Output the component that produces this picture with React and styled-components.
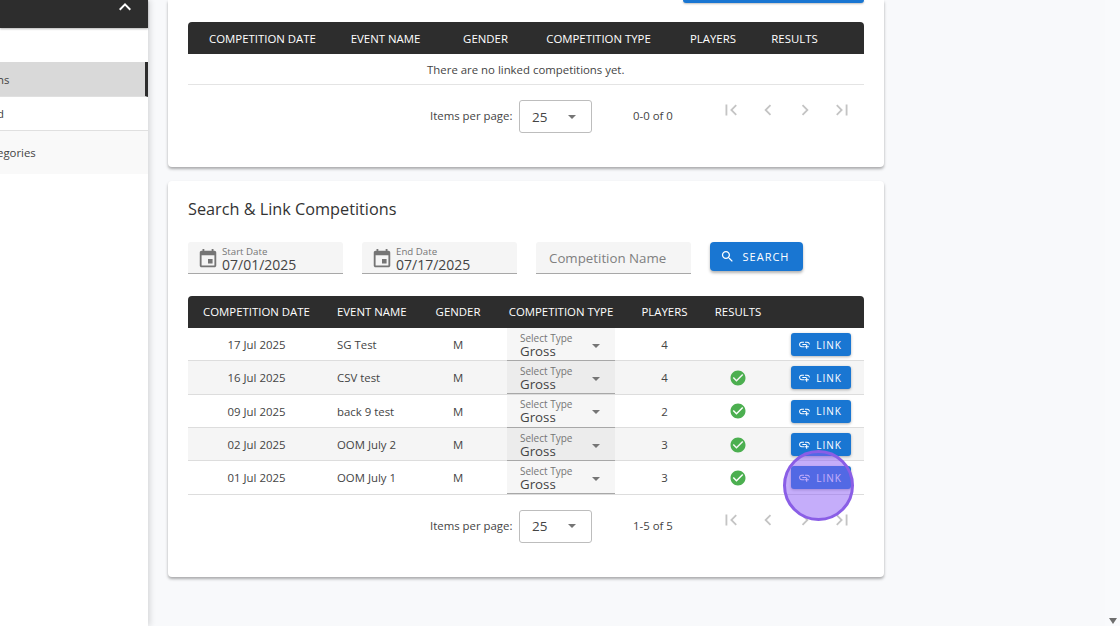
import React from 'react';
import styled, { createGlobalStyle } from 'styled-components';

const paths = {
  up: 'M12 8l-6 6 1.41 1.41L12 10.83l4.59 4.58L18 14z',
  first: 'M18.41 16.59L13.82 12l4.59-4.59L17 6l-6 6 6 6zM6 6h2v12H6z',
  prev: 'M15.41 7.41L14 6l-6 6 6 6 1.41-1.41L10.83 12z',
  next: 'M10 6L8.59 7.41 13.17 12l-4.58 4.59L10 18l6-6z',
  last: 'M5.59 7.41L10.18 12l-4.59 4.59L7 18l6-6-6-6zM16 6h2v12h-2z',
  event:
    'M17 12h-5v5h5v-5zM16 1v2H8V1H6v2H5c-1.11 0-1.99.9-1.99 2L3 19c0 1.1.89 2 2 2h14c1.1 0 2-.9 2-2V5c0-1.1-.9-2-2-2h-1V1h-2zm3 18H5V8h14v11z',
  search:
    'M15.5 14h-.79l-.28-.27C15.41 12.59 16 11.11 16 9.5 16 5.91 13.09 3 9.5 3S3 5.91 3 9.5 5.91 16 9.5 16c1.61 0 3.09-.59 4.23-1.57l.27.28v.79l5 4.99L20.49 19l-4.99-5zm-6 0C7.01 14 5 11.99 5 9.5S7.01 5 9.5 5 14 7.01 14 9.5 11.99 14 9.5 14z',
  link: 'M8 11h8v2H8zm12.1 1H22c0-2.76-2.24-5-5-5h-4v1.9h4c1.71 0 3.1 1.39 3.1 3.1zM3.9 12c0-1.71 1.39-3.1 3.1-3.1h4V7H7c-2.76 0-5 2.24-5 5s2.24 5 5 5h4v-1.9H7c-1.71 0-3.1-1.39-3.1-3.1zM17 12h-2v3h-3v2h3v3h2v-3h3v-2h-3z',
  check:
    'M12 2C6.48 2 2 6.48 2 12s4.48 10 10 10 10-4.48 10-10S17.52 2 12 2zm-2 15l-5-5 1.41-1.41L10 14.17l7.59-7.59L19 8l-9 9z',
};

function Icon({ name, size = 24, color = 'currentColor' }) {
  return (
    <svg width={size} height={size} viewBox="0 0 24 24" fill={color}>
      <path d={paths[name]} />
    </svg>
  );
}

const rows = [
  { date: '17 Jul 2025', name: 'SG Test', players: 4, done: false },
  { date: '16 Jul 2025', name: 'CSV test', players: 4, done: true },
  { date: '09 Jul 2025', name: 'back 9 test', players: 2, done: true },
  { date: '02 Jul 2025', name: 'OOM July 2', players: 3, done: true },
  { date: '01 Jul 2025', name: 'OOM July 1', players: 3, done: true },
];

const linkedCols = '149px 97px 103px 123px 106px 57px 1fr';
const searchCols = '137px 105px 56px 150px 57px 90px 1fr';

function Paginator({ range }) {
  return (
    <PagerRow>
      <PagerLabel>Items per page:</PagerLabel>
      <PageSize>
        <span>25</span>
        <Caret />
      </PageSize>
      <PagerRange>{range}</PagerRange>
      <PagerIcons>
        {['first', 'prev', 'next', 'last'].map((n) => (
          <PagerIcon key={n}>
            <Icon name={n} size={22} color="#c4c4c4" />
          </PagerIcon>
        ))}
      </PagerIcons>
    </PagerRow>
  );
}

function HeaderRow({ cols, padEvent }) {
  return (
    <TableHead $cols={cols} $raised={padEvent}>
      <HeadCell>COMPETITION DATE</HeadCell>
      <HeadCell $left={padEvent}>EVENT NAME</HeadCell>
      <HeadCell>GENDER</HeadCell>
      <HeadCell>COMPETITION TYPE</HeadCell>
      <HeadCell>PLAYERS</HeadCell>
      <HeadCell>RESULTS</HeadCell>
      <HeadCell />
    </TableHead>
  );
}

export default function App() {
  return (
    <>
      <GlobalStyle />
      <Page>
        <Sidebar>
          <SideHeader>
            <Icon name="up" size={24} color="#fff" />
          </SideHeader>
          <SideGap />
          <SideItem $active>ns</SideItem>
          <SideItem>d</SideItem>
          <SideGroup>egories</SideGroup>
        </Sidebar>

        <Main>
          <LinkedCard>
            <ActionBar>
              <ClippedButton />
            </ActionBar>
            <HeaderRow cols={linkedCols} />
            <EmptyRow>There are no linked competitions yet.</EmptyRow>
            <Paginator range="0-0 of 0" />
          </LinkedCard>

          <SearchCard>
            <Title>Search &amp; Link Competitions</Title>
            <Filters>
              <DateField>
                <Icon name="event" size={22} color="#757575" />
                <FieldText>
                  <FieldLabel>Start Date</FieldLabel>
                  <FieldValue>07/01/2025</FieldValue>
                </FieldText>
              </DateField>
              <DateField>
                <Icon name="event" size={22} color="#757575" />
                <FieldText>
                  <FieldLabel>End Date</FieldLabel>
                  <FieldValue>07/17/2025</FieldValue>
                </FieldText>
              </DateField>
              <NameField>Competition Name</NameField>
              <SearchButton>
                <Icon name="search" size={15} color="#fff" />
                SEARCH
              </SearchButton>
            </Filters>

            <HeaderRow cols={searchCols} padEvent />
            {rows.map((r, i) => (
              <Row key={r.date} $cols={searchCols} $shaded={i % 2 === 1}>
                <Cell>{r.date}</Cell>
                <Cell $left>{r.name}</Cell>
                <Cell>M</Cell>
                <TypeSelect $shaded={i % 2 === 1}>
                  <div>
                    <TypeLabel>Select Type</TypeLabel>
                    <TypeValue>Gross</TypeValue>
                  </div>
                  <Caret />
                </TypeSelect>
                <Cell>{r.players}</Cell>
                <Cell>{r.done && <Icon name="check" size={18} color="#4caf50" />}</Cell>
                <ActionCell>
                  <LinkButton>
                    <Icon name="link" size={13} color="#fff" />
                    LINK
                  </LinkButton>
                  {i === 4 && <ClickMarker />}
                </ActionCell>
              </Row>
            ))}
            <Paginator range="1-5 of 5" />
          </SearchCard>
        </Main>

        <ScrollLane>
          <ScrollArrow />
        </ScrollLane>
      </Page>
    </>
  );
}

const GlobalStyle = createGlobalStyle`
  html, body {
    margin: 0;
    height: 626px;
    overflow: hidden;
    font-family: "Open Sans", "Liberation Sans", sans-serif;
    color: #444;
    background: #f8f9fb;
  }
`;

const Page = styled.div`
  display: flex;
  width: 1120px;
  height: 626px;
  overflow: hidden;
`;

const Sidebar = styled.aside`
  flex: none;
  width: 148px;
  height: 626px;
  background: #fff;
  box-shadow: 2px 0 6px rgba(0, 0, 0, 0.14);
  z-index: 2;
  font-size: 11.4px;
  text-indent: -3px;
`;

const SideHeader = styled.div`
  display: flex;
  justify-content: flex-end;
  box-sizing: border-box;
  height: 28px;
  padding: 0 11px 0 0;
  background: #2d2d2d;
  box-shadow: 0 1px 2px rgba(0, 0, 0, 0.3);
  svg {
    margin-top: -5px;
  }
`;

const SideGap = styled.div`
  height: 34px;
`;

const SideItem = styled.div`
  display: flex;
  align-items: center;
  box-sizing: border-box;
  height: ${(p) => (p.$active ? '35px' : '34px')};
  border-right: ${(p) => (p.$active ? '3px solid #2d2d2d' : 'none')};
  border-bottom: 1px solid #e0e0e0;
  background: ${(p) => (p.$active ? '#d9d9d9' : '#fff')};
`;

const SideGroup = styled.div`
  display: flex;
  align-items: center;
  height: 43px;
  background: #f9f9f9;
`;

const Main = styled.main`
  flex: none;
  display: flex;
  flex-direction: column;
  gap: 14px;
  width: 957px;
  padding-left: 20px;
  box-sizing: border-box;
`;

const Card = styled.section`
  box-sizing: border-box;
  width: 715.5px;
  padding: 0 20px;
  background: #fff;
  border-radius: 4px;
  box-shadow: 0 2px 3px rgba(0, 0, 0, 0.32);
`;

const LinkedCard = styled(Card)`
  height: 167px;
  border-radius: 0 0 4px 4px;
`;

const SearchCard = styled(Card)`
  height: 396px;
  padding-top: 17px;
`;

const ActionBar = styled.div`
  display: flex;
  justify-content: flex-end;
  height: 22px;
`;

const ClippedButton = styled.div`
  width: 181px;
  height: 3px;
  background: #1976d2;
  border-radius: 0 0 4px 4px;
  box-shadow: 0 1px 2px rgba(0, 0, 0, 0.25);
`;

const TableHead = styled.div`
  display: grid;
  grid-template-columns: ${(p) => p.$cols};
  box-sizing: border-box;
  height: 32px;
  padding-bottom: ${(p) => (p.$raised ? '1px' : '0')};
  background: #2d2d2d;
  border-radius: 4px 4px 0 0;
`;

const HeadCell = styled.div`
  display: flex;
  align-items: center;
  justify-content: ${(p) => (p.$left ? 'flex-start' : 'center')};
  padding-left: ${(p) => (p.$left ? '12px' : '0')};
  color: #fff;
  font-size: 11.4px;
  font-weight: 400;
  white-space: nowrap;
`;

const EmptyRow = styled.div`
  height: 31px;
  line-height: 32px;
  text-align: center;
  font-size: 11.4px;
  border-bottom: 1px solid #e4e4e4;
  box-sizing: border-box;
`;

const PagerRow = styled.div`
  display: flex;
  align-items: flex-start;
  padding: 15px 0 0 242px;
  font-size: 11.4px;
`;

const PagerLabel = styled.div`
  width: 89px;
  height: 32px;
  line-height: 32px;
  white-space: nowrap;
`;

const PageSize = styled.div`
  display: flex;
  align-items: center;
  justify-content: space-between;
  box-sizing: border-box;
  width: 73px;
  height: 33px;
  padding: 0 15px 0 12px;
  border: 1px solid #bdbdbd;
  border-radius: 3px;
  font-size: 13.5px;
`;

const PagerRange = styled.div`
  width: 87px;
  height: 32px;
  margin-left: 41px;
  line-height: 32px;
  white-space: nowrap;
`;

const PagerIcons = styled.div`
  display: flex;
  gap: 15px;
  margin-top: -1px;
`;

const PagerIcon = styled.div`
  display: flex;
  width: 22px;
  height: 22px;
`;

const Caret = styled.span`
  width: 0;
  height: 0;
  border-left: 4px solid transparent;
  border-right: 4px solid transparent;
  border-top: 4px solid #757575;
`;

const Title = styled.h2`
  margin: 0 0 22px;
  height: 22px;
  line-height: 22px;
  font-size: 16.25px;
  font-weight: 400;
  color: #333;
`;

const Filters = styled.div`
  display: flex;
  align-items: flex-start;
  height: 54px;
`;

const FieldBox = styled.div`
  box-sizing: border-box;
  width: 155px;
  height: 32px;
  margin-right: 19px;
  background: #f5f5f5;
  border-bottom: 1px solid #a8a8a8;
  border-radius: 3px 3px 0 0;
`;

const DateField = styled(FieldBox)`
  display: flex;
  align-items: center;
  gap: 3px;
  padding-left: 9px;
  svg {
    margin-top: 2px;
  }
`;

const FieldText = styled.div`
  display: flex;
  flex-direction: column;
`;

const FieldLabel = styled.span`
  font-size: 9.7px;
  line-height: 10px;
  margin-top: 4px;
  color: #757575;
`;

const FieldValue = styled.span`
  font-size: 14px;
  line-height: 15px;
  color: #444;
`;

const NameField = styled(FieldBox)`
  line-height: 33px;
  padding-left: 13px;
  font-size: 13.3px;
  color: #808080;
`;

const SearchButton = styled.button`
  display: flex;
  align-items: center;
  justify-content: center;
  gap: 8px;
  width: 93px;
  height: 29px;
  padding: 0 4px 0 0;
  border: none;
  border-radius: 4px;
  background: #1976d2;
  color: #fff;
  font-family: inherit;
  font-size: 11px;
  font-weight: 500;
  letter-spacing: 1px;
  box-shadow: 0 2px 3px rgba(0, 0, 0, 0.3);
`;

const Row = styled.div`
  display: grid;
  grid-template-columns: ${(p) => p.$cols};
  box-sizing: border-box;
  height: 33.35px;
  background: ${(p) => (p.$shaded ? '#f5f5f5' : '#fff')};
  border-bottom: 1px solid #ddd;
`;

const Cell = styled.div`
  display: flex;
  align-items: center;
  justify-content: ${(p) => (p.$left ? 'flex-start' : 'center')};
  padding-left: ${(p) => (p.$left ? '12px' : '0')};
  font-size: 11.4px;
  white-space: nowrap;
`;

const TypeSelect = styled.div`
  display: flex;
  align-items: center;
  justify-content: space-between;
  box-sizing: border-box;
  width: 108px;
  height: 33px;
  margin-left: 21px;
  padding: 3px 15px 0 13px;
  background: ${(p) => (p.$shaded ? '#ececec' : '#f6f6f6')};
  border-bottom: 1px solid #a8a8a8;
`;

const TypeLabel = styled.div`
  font-size: 10px;
  line-height: 11px;
  color: #757575;
`;

const TypeValue = styled.div`
  font-size: 13.3px;
  line-height: 15px;
  color: #444;
`;

const ActionCell = styled.div`
  position: relative;
  display: flex;
  align-items: center;
  padding-left: 8px;
`;

const LinkButton = styled.button`
  display: flex;
  align-items: center;
  justify-content: center;
  gap: 5px;
  width: 60px;
  height: 23px;
  padding: 0 2px 0 0;
  border: none;
  border-radius: 3px;
  background: #1976d2;
  color: #fff;
  font-family: inherit;
  font-size: 10px;
  font-weight: 500;
  letter-spacing: 1px;
  box-shadow: 0 1px 3px rgba(0, 0, 0, 0.3);
`;

const ClickMarker = styled.div`
  position: absolute;
  left: 0;
  top: -11px;
  box-sizing: border-box;
  width: 71px;
  height: 71px;
  border: 3px solid #8a5ee6;
  border-radius: 50%;
  background: rgba(139, 92, 246, 0.5);
`;

const ScrollLane = styled.div`
  flex: 1;
  display: flex;
  align-items: flex-end;
  justify-content: center;
  padding-bottom: 2px;
  background: #f9fafc;
`;

const ScrollArrow = styled.span`
  width: 0;
  height: 0;
  border-left: 4.5px solid transparent;
  border-right: 4.5px solid transparent;
  border-top: 6px solid #6e6e6e;
`;
